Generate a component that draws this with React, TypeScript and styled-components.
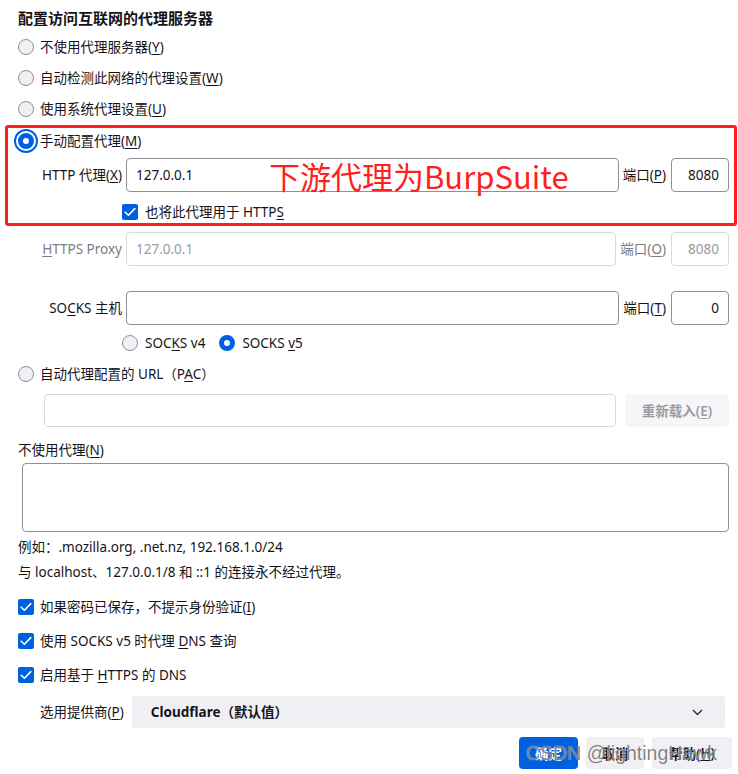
import React from 'react';
import styled, { createGlobalStyle, css } from 'styled-components';

const GlobalStyle = createGlobalStyle`
  html, body {
    margin: 0;
    padding: 0;
    background: #ffffff;
  }
  body {
    font-family: "Segoe UI", "Noto Sans", "Noto Sans CJK SC", sans-serif;
    font-size: 13.5px;
    color: #15141a;
  }
  u {
    text-underline-offset: 2px;
  }
`;

const Page = styled.div`
  width: 738px;
  height: 774px;
  box-sizing: border-box;
  padding: 3px 9px 0 18px;
  display: flex;
  flex-direction: column;
  position: relative;
  overflow: hidden;
`;

const Title = styled.div`
  height: 28px;
  display: flex;
  align-items: center;
  font-size: 15px;
  font-weight: 700;
`;

const Row = styled.div<{ $h: number; $mt?: number; $indent?: number }>`
  display: flex;
  align-items: center;
  height: ${p => p.$h}px;
  margin-top: ${p => p.$mt ?? 0}px;
  padding-left: ${p => p.$indent ?? 0}px;
  line-height: 20px;
  white-space: nowrap;
`;

const Option = styled.span<{ $gap?: number }>`
  display: inline-flex;
  align-items: center;
  gap: ${p => p.$gap ?? 6}px;
  margin-right: 14px;
`;

const Text = styled.span`
  white-space: nowrap;
`;

const Radio = styled.span<{ $checked?: boolean; $focused?: boolean }>`
  width: 16px;
  height: 16px;
  box-sizing: border-box;
  border-radius: 50%;
  flex: none;
  border: 1px solid #8f8f9d;
  background: #f0f0f4;
  ${p => p.$checked && css`
    border: 5px solid #0061e0;
    background: #ffffff;
  `}
  ${p => p.$focused && css`
    outline: 2px solid #0061e0;
    outline-offset: 2px;
  `}
`;

const CheckBox = styled.span`
  width: 16px;
  height: 16px;
  border-radius: 2px;
  background: #0061e0;
  flex: none;
  display: flex;
  align-items: center;
  justify-content: center;
`;

const Checked = () => (
  <CheckBox>
    <svg width="12" height="10" viewBox="0 0 12 10">
      <path d="M1.2 5.2 L4.4 8.3 L10.8 1.6" fill="none" stroke="#fff" strokeWidth="1.6" strokeLinecap="round" strokeLinejoin="round" />
    </svg>
  </CheckBox>
);

const Highlight = styled.div`
  margin: 1px -8px 0 -13px;
  border: 3px solid #ff1f1f;
  border-radius: 3px;
  padding: 0 5px 0 10px;
  display: flex;
  flex-direction: column;
`;

const FieldLabel = styled.span<{ $disabled?: boolean }>`
  width: 108px;
  flex: none;
  text-align: right;
  padding-right: 4px;
  box-sizing: border-box;
  color: ${p => (p.$disabled ? '#7c7c84' : '#15141a')};
`;

const TextBox = styled.div<{ $disabled?: boolean }>`
  position: relative;
  flex: 1;
  height: 100%;
  box-sizing: border-box;
  border: 1px solid ${p => (p.$disabled ? '#d9d9dd' : '#8f8f9d')};
  border-radius: 4px;
  padding: 0 9px;
  display: flex;
  align-items: center;
  color: ${p => (p.$disabled ? '#9a9aa2' : '#15141a')};
  background: #ffffff;
`;

const PortLabel = styled.span<{ $disabled?: boolean }>`
  flex: none;
  padding: 0 5px 0 4px;
  color: ${p => (p.$disabled ? '#7c7c84' : '#15141a')};
`;

const PortBox = styled.div<{ $disabled?: boolean }>`
  width: 58px;
  height: 100%;
  flex: none;
  box-sizing: border-box;
  border: 1px solid ${p => (p.$disabled ? '#d9d9dd' : '#8f8f9d')};
  border-radius: 4px;
  padding: 0 9px;
  display: flex;
  align-items: center;
  justify-content: flex-end;
  color: ${p => (p.$disabled ? '#9a9aa2' : '#15141a')};
`;

const Annotation = styled.span`
  position: absolute;
  left: 142px;
  top: -3px;
  font-family: "Noto Sans CJK SC", "Noto Sans", sans-serif;
  font-size: 31px;
  line-height: 40px;
  color: #ff1f1f;
  pointer-events: none;
`;

const GhostButton = styled.div`
  width: 104px;
  height: 100%;
  flex: none;
  margin-left: 9px;
  border-radius: 4px;
  background: #f6f6f8;
  color: #9a9aa2;
  font-weight: 600;
  display: flex;
  align-items: center;
  justify-content: center;
`;

const TextArea = styled.div`
  margin: 1px 0 0 4px;
  height: 69px;
  box-sizing: border-box;
  border: 1px solid #8f8f9d;
  border-radius: 4px;
`;

const Select = styled.div`
  flex: 1;
  height: 100%;
  margin: 0 4px 0 8px;
  padding: 0 22px 0 19px;
  border-radius: 4px;
  background: #f0f0f4;
  display: flex;
  align-items: center;
  justify-content: space-between;
  font-weight: 700;
`;

const ButtonRow = styled.div`
  display: flex;
  justify-content: flex-end;
  gap: 8px;
  height: 32px;
  margin: 9px -3px 0 0;
`;

const Button = styled.div<{ $primary?: boolean; $w: number }>`
  width: ${p => p.$w}px;
  border-radius: 4px;
  display: flex;
  align-items: center;
  justify-content: center;
  font-weight: 600;
  background: ${p => (p.$primary ? '#0061e0' : '#f0f0f4')};
  color: ${p => (p.$primary ? '#ffffff' : '#15141a')};
`;

const Watermark = styled.span`
  position: absolute;
  left: 526px;
  top: 740px;
  font-family: "Liberation Sans", Arial, sans-serif;
  font-size: 19.5px;
  line-height: 26px;
  color: rgba(95, 95, 100, 0.78);
  text-shadow: 0 0 1px rgba(255, 255, 255, 0.9);
  pointer-events: none;
`;

const Chevron = () => (
  <svg width="11" height="7" viewBox="0 0 11 7">
    <path d="M1 1 L5.5 5.5 L10 1" fill="none" stroke="#2b2a33" strokeWidth="1.4" />
  </svg>
);

export default function App() {
  return (
    <>
      <GlobalStyle />
      <Page>
        <Title>配置访问互联网的代理服务器</Title>
        <Row $h={31}><Option><Radio /><Text>不使用代理服务器(<u>Y</u>)</Text></Option></Row>
        <Row $h={31}><Option><Radio /><Text>自动检测此网络的代理设置(<u>W</u>)</Text></Option></Row>
        <Row $h={31}><Option><Radio /><Text>使用系统代理设置(<u>U</u>)</Text></Option></Row>

        <Highlight>
          <Row $h={26}><Option><Radio $checked $focused /><Text>手动配置代理(<u>M</u>)</Text></Option></Row>
          <Row $h={34} $mt={4}>
            <FieldLabel>HTTP 代理(<u>X</u>)</FieldLabel>
            <TextBox>
              127.0.0.1
              <Annotation>下游代理为BurpSuite</Annotation>
            </TextBox>
            <PortLabel>端口(<u>P</u>)</PortLabel>
            <PortBox>8080</PortBox>
          </Row>
          <Row $h={23} $mt={8} $indent={104}>
            <Option $gap={7}><Checked /><Text>也将此代理用于 HTTP<u>S</u></Text></Option>
          </Row>
        </Highlight>

        <Row $h={34} $mt={6}>
          <FieldLabel $disabled><u>H</u>TTPS Proxy</FieldLabel>
          <TextBox $disabled>127.0.0.1</TextBox>
          <PortLabel $disabled>端口(<u>O</u>)</PortLabel>
          <PortBox $disabled>8080</PortBox>
        </Row>
        <Row $h={34} $mt={25}>
          <FieldLabel>SO<u>C</u>KS 主机</FieldLabel>
          <TextBox />
          <PortLabel>端口(<u>T</u>)</PortLabel>
          <PortBox>0</PortBox>
        </Row>
        <Row $h={26} $mt={5} $indent={104}>
          <Option $gap={7}><Radio /><Text>SOC<u>K</u>S v4</Text></Option>
          <Option $gap={7}><Radio $checked /><Text>SOCKS <u>v</u>5</Text></Option>
        </Row>
        <Row $h={26} $mt={5}>
          <Option><Radio /><Text>自动代理配置的 URL（P<u>A</u>C）</Text></Option>
        </Row>
        <Row $h={33} $mt={7} $indent={26}>
          <TextBox $disabled />
          <GhostButton>重新载入(<u>E</u>)</GhostButton>
        </Row>
        <Row $h={24} $mt={11}><Text>不使用代理(<u>N</u>)</Text></Row>
        <TextArea />
        <Row $h={20} $mt={5}><Text>例如：.mozilla.org, .net.nz, 192.168.1.0/24</Text></Row>
        <Row $h={20} $mt={5}><Text>与 localhost、127.0.0.1/8 和 ::1 的连接永不经过代理。</Text></Row>
        <Row $h={34} $mt={8}><Option><Checked /><Text>如果密码已保存，不提示身份验证(<u>I</u>)</Text></Option></Row>
        <Row $h={34}><Option><Checked /><Text>使用 SOCKS v5 时代理 <u>D</u>NS 查询</Text></Option></Row>
        <Row $h={34}><Option><Checked /><Text>启用基于 <u>H</u>TTPS 的 DNS</Text></Option></Row>
        <Row $h={32} $mt={4} $indent={22}>
          <Text>选用提供商(<u>P</u>)</Text>
          <Select>
            <span>Cloudflare（默认值）</span>
            <Chevron />
          </Select>
        </Row>
        <ButtonRow>
          <Button $primary $w={59}>确定</Button>
          <Button $w={58}>取消</Button>
          <Button $w={80}>帮助(<u>H</u>)</Button>
        </ButtonRow>
        <Watermark>CSDN @lightingHawk</Watermark>
      </Page>
    </>
  );
}
